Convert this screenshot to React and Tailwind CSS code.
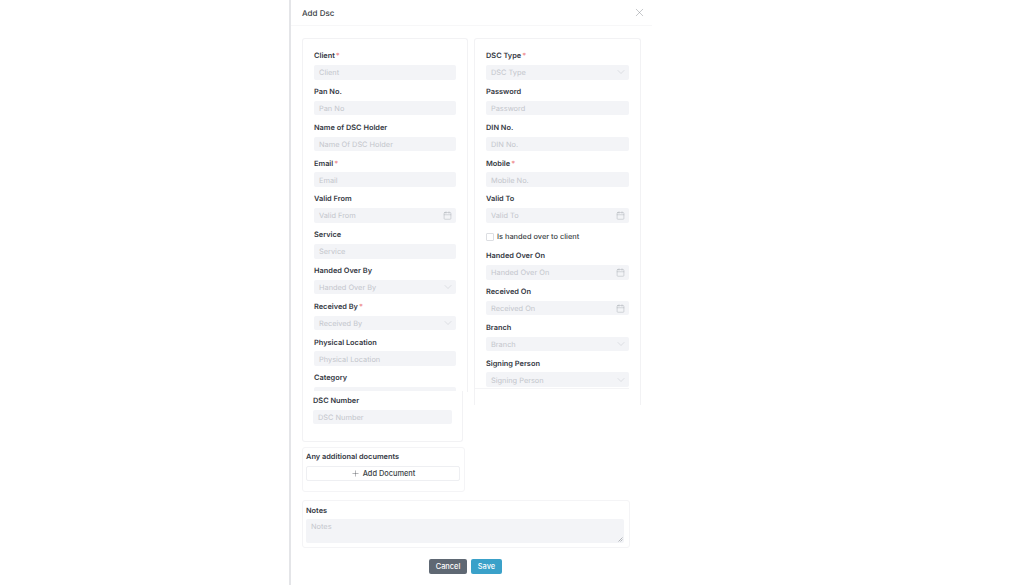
import { Calendar, ChevronDown, Plus, X } from "lucide-react";

const leftFields = [
  { label: "Client", hint: "Client", required: true },
  { label: "Pan No.", hint: "Pan No" },
  { label: "Name of DSC Holder", hint: "Name Of DSC Holder" },
  { label: "Email", hint: "Email", required: true },
  { label: "Valid From", hint: "Valid From", icon: "date" },
  { label: "Service", hint: "Service" },
  { label: "Handed Over By", hint: "Handed Over By", icon: "select" },
  { label: "Received By", hint: "Received By", icon: "select", required: true },
  { label: "Physical Location", hint: "Physical Location" },
  { label: "Category", hint: "", icon: "select" },
];

const rightTop = [
  { label: "DSC Type", hint: "DSC Type", icon: "select", required: true },
  { label: "Password", hint: "Password" },
  { label: "DIN No.", hint: "DIN No." },
  { label: "Mobile", hint: "Mobile No.", required: true },
  { label: "Valid To", hint: "Valid To", icon: "date" },
];

const rightBottom = [
  { label: "Handed Over On", hint: "Handed Over On", icon: "date" },
  { label: "Received On", hint: "Received On", icon: "date" },
  { label: "Branch", hint: "Branch", icon: "select" },
  { label: "Signing Person", hint: "Signing Person", icon: "select" },
];

function Field({ label, hint, icon, required }) {
  return (
    <div className="h-[35.8px]">
      <div className="flex h-[20px] items-start pt-[5.2px] text-[7.4px] leading-[11px] font-semibold text-[#33373f]">
        {label}
        {required && <span className="ml-px text-[#ee8a8d]">*</span>}
      </div>
      <div className="flex h-[14.6px] items-center justify-between rounded-[2px] bg-[#f3f4f7] pr-[4px] pl-[5px] text-[7.4px] text-[#c3c6cc]">
        <span className="pt-px">{hint}</span>
        {icon === "date" && <Calendar size={9} strokeWidth={1.1} className="text-[#a3a6ad]" />}
        {icon === "select" && <ChevronDown size={12} strokeWidth={0.9} className="-mr-[2px] text-[#c0c3c9]" />}
      </div>
    </div>
  );
}

export default function App() {
  return (
    <div className="h-[585px] w-full overflow-hidden bg-white font-['Inter','Liberation_Sans',sans-serif] [text-rendering:geometricPrecision]">
      <div className="ml-[289px] h-full w-[363px] border-l-2 border-[#e4e5e8] bg-white">
        <div className="flex h-[26px] items-center justify-between border-b border-[#f7f7f8] pr-[6px] pl-[11px]">
          <span className="text-[8px] font-medium text-[#3b3f46]">Add Dsc</span>
          <X size={13} strokeWidth={0.8} className="text-[#7d8087]" />
        </div>

        <div className="mt-[12px] ml-[11px] flex h-[367px] w-[339px] gap-[6px] overflow-hidden">
          <div className="h-[354px] w-[166px] shrink-0 overflow-hidden rounded-t-[3px] border-x border-t border-[#f2f2f4] px-[11px] pt-[6px]">
            {leftFields.map((f) => (
              <Field key={f.label} {...f} />
            ))}
          </div>
          <div className="h-[367px] w-[167px] shrink-0 rounded-t-[3px] border-x border-t border-[#f2f2f4] px-[11px] pt-[6px]">
            {rightTop.map((f) => (
              <Field key={f.label} {...f} />
            ))}
            <label className="flex h-[21px] items-center gap-[3px] pt-[5px] text-[7.4px] font-medium text-[#3b3f46]">
              <span className="h-[8px] w-[8px] rounded-[1px] border border-[#dcdee2] bg-white" />
              Is handed over to client
            </label>
            {rightBottom.map((f) => (
              <Field key={f.label} {...f} />
            ))}
            <div className="-ml-[11px] h-px bg-[#f4f4f6]" />
          </div>
        </div>

        <div className="relative z-10 -mt-[14px] ml-[11px] h-[51px] w-[161px] rounded-b-[3px] border-x border-b border-[#f2f2f4] bg-white px-[10px]">
          <div className="pt-[4px] text-[7.4px] leading-[11px] font-semibold text-[#33373f]">DSC Number</div>
          <div className="mt-[4px] flex h-[14px] items-center rounded-[2px] bg-[#f3f4f7] px-[5px] pt-px text-[7.4px] text-[#c3c6cc]">
            DSC Number
          </div>
        </div>

        <div className="mt-[5px] ml-[11px] h-[45px] w-[163px] rounded-[3px] border border-[#f4f4f6] px-[3px] pt-[3px]">
          <div className="text-[7.4px] leading-[11px] font-semibold text-[#33373f]">Any additional documents</div>
          <button
            type="button"
            className="mt-[4px] flex h-[15px] w-[154px] items-center justify-center gap-[3px] rounded-[2px] border border-[#eeeff2] bg-white text-[7.4px] font-medium text-[#3b3f46]"
          >
            <Plus size={9} strokeWidth={1} />
            Add Document
          </button>
        </div>

        <div className="mt-[8px] ml-[11px] h-[48px] w-[328px] rounded-[3px] border border-[#f4f4f6] px-[3px] pt-[3.5px]">
          <div className="text-[7.4px] leading-[11px] font-semibold text-[#33373f]">Notes</div>
          <div className="relative mt-[3.5px] h-[24px] w-[318px] rounded-[2px] bg-[#f3f4f7] px-[5px] pt-[3px] text-[7.4px] leading-[10px] text-[#c3c6cc]">
            Notes
            <svg width="5" height="5" viewBox="0 0 5 5" className="absolute right-px bottom-px text-[#8a8d93]">
              <path d="M0.5 4.5 L4.5 0.5 M2.5 4.5 L4.5 2.5" stroke="currentColor" strokeWidth="0.6" />
            </svg>
          </div>
        </div>

        <div className="mt-[11px] ml-[138px] flex gap-[4px]">
          <button type="button" className="flex h-[14.5px] w-[38px] items-center justify-center rounded-[2px] bg-[#5f6873] text-[7.4px] font-medium text-white">
            Cancel
          </button>
          <button type="button" className="flex h-[14.5px] w-[31px] items-center justify-center rounded-[2px] bg-[#3aa1c9] text-[7.4px] font-medium text-white">
            Save
          </button>
        </div>
      </div>
    </div>
  );
}
